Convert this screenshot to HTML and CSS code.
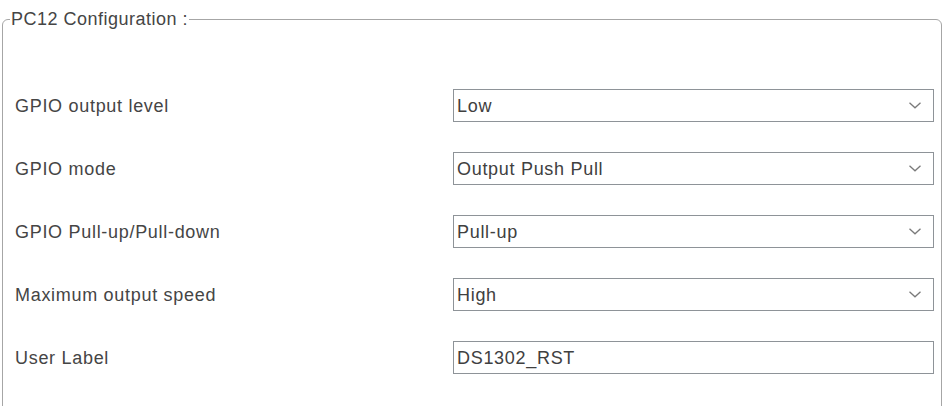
FILE: index.html
```html
<!DOCTYPE html>
<html>
<head>
<meta charset="utf-8">
<link rel="stylesheet" href="styles.css">
</head>
<body>
<fieldset class="config">
  <legend class="config-title">PC12 Configuration :</legend>
  <div class="rows">
    <div class="label">GPIO output level</div>
    <div class="field">
      <span class="value">Low</span>
      <svg class="chev" width="12" height="7" viewBox="0 0 12 7"><polyline points="0.5,0.8 6,5.8 11.5,0.8" fill="none" stroke="#7a7a7a" stroke-width="1.3"/></svg>
    </div>
    <div class="label">GPIO mode</div>
    <div class="field">
      <span class="value">Output Push Pull</span>
      <svg class="chev" width="12" height="7" viewBox="0 0 12 7"><polyline points="0.5,0.8 6,5.8 11.5,0.8" fill="none" stroke="#7a7a7a" stroke-width="1.3"/></svg>
    </div>
    <div class="label">GPIO Pull-up/Pull-down</div>
    <div class="field">
      <span class="value">Pull-up</span>
      <svg class="chev" width="12" height="7" viewBox="0 0 12 7"><polyline points="0.5,0.8 6,5.8 11.5,0.8" fill="none" stroke="#7a7a7a" stroke-width="1.3"/></svg>
    </div>
    <div class="label">Maximum output speed</div>
    <div class="field">
      <span class="value">High</span>
      <svg class="chev" width="12" height="7" viewBox="0 0 12 7"><polyline points="0.5,0.8 6,5.8 11.5,0.8" fill="none" stroke="#7a7a7a" stroke-width="1.3"/></svg>
    </div>
    <div class="label">User Label</div>
    <div class="field input">
      <span class="value">DS1302_RST</span>
    </div>
  </div>
</fieldset>
</body>
</html>
```

FILE: styles.css
```css
html, body {
  margin: 0;
  padding: 0;
  background: #ffffff;
  overflow: hidden;
}
body {
  font-family: "Liberation Sans", Arial, sans-serif;
  font-size: 18px;
  color: #454545;
  letter-spacing: 0.7px;
}
.config {
  box-sizing: border-box;
  width: 940px;
  height: 420px;
  margin: 9px 0 0 2px;
  padding: 0 8px 0 7px;
  border: 1px solid #a6a6a6;
  border-radius: 6px 6px 0 0;
  min-width: 0;
}
.config-title {
  padding: 0 1px;
  font-size: 18px;
  line-height: 21px;
  letter-spacing: 0.5px;
  color: #454545;
}
.rows {
  display: grid;
  grid-template-columns: 443px 481px;
  grid-auto-rows: 33px;
  row-gap: 30px;
  padding-top: 59px;
}
.label {
  display: flex;
  align-items: center;
  padding-left: 5px;
  line-height: 21px;
  padding-top: 1px;
}
.field {
  box-sizing: border-box;
  display: flex;
  align-items: center;
  justify-content: space-between;
  height: 33px;
  border: 1px solid #8e9398;
  padding: 0 12px 0 3px;
  background: #fff;
  line-height: 21px;
  color: #404040;
}
.value {
  padding-top: 1px;
}
.chev {
  display: block;
  margin-top: -1px;
}
```
